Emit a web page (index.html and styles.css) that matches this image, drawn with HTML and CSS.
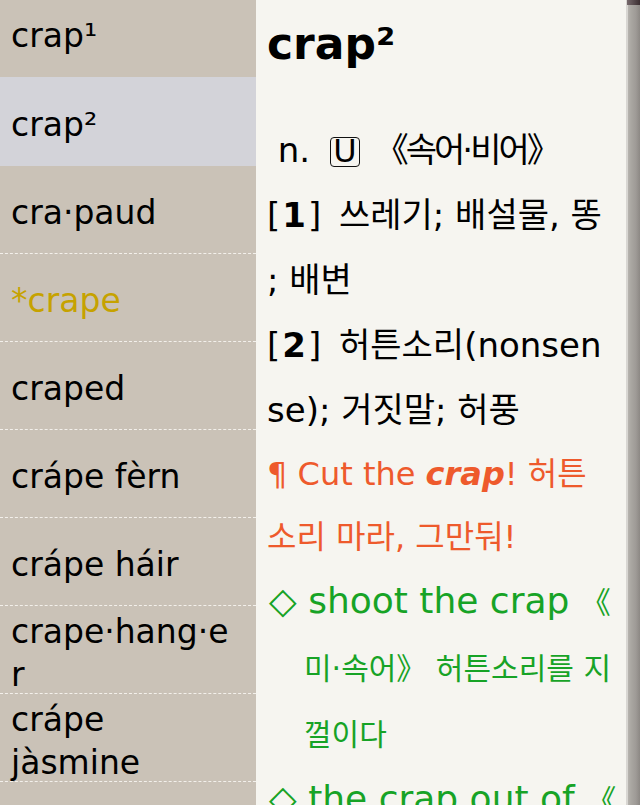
FILE: index.html
```html
<!DOCTYPE html>
<html lang="ko">
<head>
    <meta charset="UTF-8">
    <title>crap² - 사전</title>
    <link rel="stylesheet" href="styles.css">
</head>
<body>
    <div class="screen">
        <!-- word list -->
        <ul class="index">
            <li class="entry quiet">crap¹</li>
            <li class="entry current">crap²</li>
            <li class="entry">cra·paud</li>
            <li class="entry starred">*crape</li>
            <li class="entry">craped</li>
            <li class="entry">crápe fèrn</li>
            <li class="entry">crápe háir</li>
            <li class="entry">crape·hang·er</li>
            <li class="entry">crápe jàsmine</li>
            <li class="entry"></li>
        </ul>

        <!-- article -->
        <div class="article">
            <h1 class="headword">crap²</h1>
            <p class="sense">&nbsp;n. <span class="tag">U</span> <span class="label">《속어·비어》</span><br><span class="num">[<b>1</b>]</span> 쓰레기; 배설물, 똥<br>; 배변<br><span class="num">[<b>2</b>]</span> 허튼소리(nonsen<br>se); 거짓말; 허풍</p>
            <p class="example">¶ Cut the <b><i>crap</i></b>! 허튼<br>소리 마라, 그만둬!</p>
            <p class="idiom">◇ shoot the crap <span class="gloss">《<br>미·속어》 허튼소리를 지<br>껄이다</span></p>
            <p class="idiom">◇ the crap out of <span class="gloss">《</span></p>
        </div>

        <div class="scrollbar">
            <div class="scrollbar-cap"></div>
        </div>
    </div>
</body>
</html>
```

FILE: styles.css
```css
html, body {
    margin: 0;
    height: 100%;
    overflow: hidden;
}
body {
    font-family: 'DejaVu Sans', 'Noto Sans CJK KR', sans-serif;
    color: #000;
    background-color: #f6f5f0;
}
.screen {
    display: flex;
    height: 805px;
    overflow: hidden;
}
.index {
    width: 256px;
    flex: none;
    margin: -11px 0 0;
    padding: 0;
    list-style: none;
    background: #cac2b7;
}
.entry {
    box-sizing: border-box;
    height: 88px;
    padding: 6px 25px 0 11px;
    display: flex;
    align-items: center;
    font-size: 33px;
    line-height: 43px;
    overflow-wrap: anywhere;
    border-bottom: 1px dashed #f3f0eb;
}
.entry.quiet {
    border-bottom-color: transparent;
}
.entry.current {
    background: #d3d3d9;
    border-bottom-color: transparent;
    height: 89px;
}
.entry.starred {
    color: #c6a200;
}
.article {
    flex: 1;
    padding: 0 4px 0 11px;
    white-space: nowrap;
    overflow: hidden;
}
.headword {
    margin: 12px 0 0;
    font-size: 44px;
    line-height: 64px;
    font-weight: bold;
}
.sense {
    margin: 42px 0 0;
    font-size: 34px;
    line-height: 65px;
}
.tag {
    display: inline-block;
    box-sizing: border-box;
    width: 30px;
    height: 30px;
    margin: 0 4px 0 9px;
    border: 1.5px solid #111;
    border-radius: 4px;
    font-size: 32px;
    line-height: 27px;
    text-align: center;
}
.label {
    letter-spacing: -3px;
}
.num {
    letter-spacing: 2px;
    margin-right: 5px;
}
.example {
    margin: 0;
    font-size: 32px;
    line-height: 63px;
    color: #ee5a2c;
}
.idiom {
    margin: 0;
    padding-left: 37px;
    text-indent: -35px;
    font-size: 36px;
    line-height: 64px;
    color: #17a326;
}
.gloss {
    font-size: 30px;
}
.scrollbar {
    width: 14px;
    flex: none;
    background: linear-gradient(90deg, #d8d6d2 0, #d8d6d2 2px, #b6b3ae 2px, #aaa7a2 5px, #9e9a96 10px, #8c8884 14px);
}
.scrollbar-cap {
    height: 5px;
    margin-left: 1px;
    background: linear-gradient(90deg, #76696c, #3b2e31);
}
```
